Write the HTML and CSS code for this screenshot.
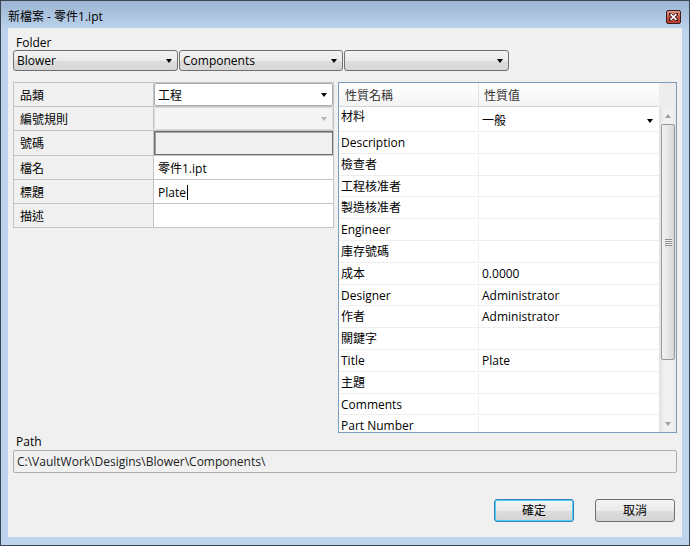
FILE: index.html
```html
<!DOCTYPE html>
<html lang="zh-Hant">
<head>
    <meta charset="UTF-8">
    <title>新檔案 - 零件1.ipt</title>
    <link rel="stylesheet" href="styles.css">
</head>
<body>
    <div class="window">
        <div class="titlebar">
            <span class="title">新檔案 - 零件1.ipt</span>
            <span class="close-btn">
                <svg width="9" height="8" viewBox="0 0 9 8">
                    <path d="M1 1 L8 7 M8 1 L1 7" stroke="#3a1414" stroke-width="3.2" stroke-linecap="square"/>
                    <path d="M1.5 1.2 L7.5 6.8 M7.5 1.2 L1.5 6.8" stroke="#fff" stroke-width="1.6"/>
                </svg>
            </span>
        </div>

        <div class="client">
            <div class="field-label">Folder</div>
            <div class="folder-row">
                <div class="combo combo-blower"><span>Blower</span><i class="arrow"></i></div>
                <div class="combo combo-comp"><span>Components</span><i class="arrow"></i></div>
                <div class="combo combo-empty"><span></span><i class="arrow"></i></div>
            </div>

            <div class="main">
                <div class="prop-grid">
                    <div class="cell label">品類</div>
                    <div class="cell value"><div class="cell-combo">工程<i class="arrow"></i></div></div>
                    <div class="cell label">編號規則</div>
                    <div class="cell value"><div class="cell-combo disabled"><i class="arrow"></i></div></div>
                    <div class="cell label tall">號碼</div>
                    <div class="cell value tall"><div class="cell-readonly"></div></div>
                    <div class="cell label">檔名</div>
                    <div class="cell value text">零件1.ipt</div>
                    <div class="cell label">標題</div>
                    <div class="cell value text">Plate<span class="caret"></span></div>
                    <div class="cell label">描述</div>
                    <div class="cell value text"></div>
                </div>

                <div class="prop-table">
                    <div class="prop-head">
                        <div class="head-cell name">性質名稱</div>
                        <div class="head-cell val">性質值</div>
                        <div class="head-corner"></div>
                    </div>
                    <div class="prop-body">
                        <div class="prop-rows">
                            <div class="prop-row first">
                                <div class="p-name">材料</div>
                                <div class="p-val"><span>一般</span><i class="arrow"></i></div>
                            </div>
                            <div class="prop-row"><div class="p-name">Description</div><div class="p-val"></div></div>
                            <div class="prop-row"><div class="p-name">檢查者</div><div class="p-val"></div></div>
                            <div class="prop-row"><div class="p-name">工程核准者</div><div class="p-val"></div></div>
                            <div class="prop-row"><div class="p-name">製造核准者</div><div class="p-val"></div></div>
                            <div class="prop-row"><div class="p-name">Engineer</div><div class="p-val"></div></div>
                            <div class="prop-row"><div class="p-name">庫存號碼</div><div class="p-val"></div></div>
                            <div class="prop-row"><div class="p-name">成本</div><div class="p-val">0.0000</div></div>
                            <div class="prop-row"><div class="p-name">Designer</div><div class="p-val">Administrator</div></div>
                            <div class="prop-row"><div class="p-name">作者</div><div class="p-val">Administrator</div></div>
                            <div class="prop-row"><div class="p-name">關鍵字</div><div class="p-val"></div></div>
                            <div class="prop-row"><div class="p-name">Title</div><div class="p-val">Plate</div></div>
                            <div class="prop-row"><div class="p-name">主題</div><div class="p-val"></div></div>
                            <div class="prop-row"><div class="p-name">Comments</div><div class="p-val"></div></div>
                            <div class="prop-row"><div class="p-name">Part Number</div><div class="p-val"></div></div>
                        </div>
                        <div class="scrollbar">
                            <div class="sb-btn"><i class="sb-up"></i></div>
                            <div class="sb-thumb"><i class="grip"></i></div>
                            <div class="sb-track"></div>
                            <div class="sb-btn"><i class="sb-down"></i></div>
                        </div>
                    </div>
                </div>
            </div>

            <div class="field-label path-label">Path</div>
            <div class="path-box">C:\VaultWork\Desigins\Blower\Components\</div>

            <div class="buttons">
                <div class="btn default">確定</div>
                <div class="btn">取消</div>
            </div>
        </div>
    </div>
</body>
</html>
```

FILE: styles.css
```css
* {
    margin: 0;
    padding: 0;
    box-sizing: border-box;
}

body {
    background: #bed4ec;
    font-family: 'Open Sans', 'Noto Sans CJK TC', sans-serif;
    font-size: 12px;
    color: #000;
}

.window {
    width: 690px;
    height: 546px;
    border: 1px solid #3a4654;
    background: #bed4ec;
    display: flex;
    flex-direction: column;
    overflow: hidden;
}

.titlebar {
    height: 27px;
    flex: none;
    display: flex;
    align-items: flex-start;
    justify-content: space-between;
    padding: 0 8px 0 7px;
    background: linear-gradient(#9cb5d2, #bad1eb);
}

.title {
    padding-top: 8px;
    line-height: 16px;
}

.close-btn {
    margin-top: 9px;
    width: 15px;
    height: 14px;
    border: 1px solid #3c1c1c;
    border-radius: 2px;
    background: linear-gradient(#e39a8a, #c5503c 55%, #b9412e);
    display: flex;
    align-items: center;
    justify-content: center;
}

.client {
    flex: 1;
    margin: 0 7px 8px 7px;
    background: #f0f0f0;
    padding: 7px 5px 15px;
    display: flex;
    flex-direction: column;
}

.field-label {
    height: 15px;
    line-height: 16px;
    padding-left: 3px;
}

/* folder combos */
.folder-row {
    display: flex;
    gap: 1px;
    height: 21px;
}

.combo {
    height: 21px;
    border: 1px solid #707070;
    border-radius: 3px;
    background: linear-gradient(#f3f3f3, #ebebeb 50%, #dddddd 51%, #d6d6d6);
    display: flex;
    align-items: center;
    justify-content: space-between;
    padding: 0 4px 0 3px;
    line-height: 19px;
}

.combo-blower { width: 165px; }
.combo-comp { width: 164px; }
.combo-empty { width: 165px; }

.arrow {
    width: 0;
    height: 0;
    border-left: 3.5px solid transparent;
    border-right: 3.5px solid transparent;
    border-top: 4px solid #000;
    margin-right: 1px;
}

/* main area */
.main {
    margin-top: 11px;
    height: 351px;
    display: flex;
    gap: 4px;
}

.prop-grid {
    width: 321px;
    align-self: flex-start;
    display: grid;
    grid-template-columns: 140px 1fr;
    border-top: 1px solid #c4c4c4;
    border-left: 1px solid #c4c4c4;
}

.cell {
    height: 24px;
    border-right: 1px solid #c4c4c4;
    border-bottom: 1px solid #c4c4c4;
}

.cell.tall {
    height: 25px;
}

.cell.label {
    padding: 1px 0 0 6px;
    line-height: 23px;
    background: #f0f0f0;
}

.cell.value {
    background: #fff;
}

.cell.text {
    padding: 2px 0 0 4px;
    line-height: 21px;
    display: flex;
    align-items: center;
}

.caret {
    width: 1px;
    height: 15px;
    background: #000;
    margin-left: 1px;
}

.cell-combo {
    height: 23px;
    border: 1px solid #acacac;
    border-radius: 2px;
    background: #fff;
    display: flex;
    align-items: center;
    justify-content: space-between;
    padding: 1px 4px 0 3px;
}

.cell-combo.disabled {
    background: #f4f4f4;
    border-color: #d9d9d9;
    justify-content: flex-end;
}

.cell-combo.disabled .arrow {
    border-top-color: #b4b4b4;
}

.cell-readonly {
    height: 24px;
    background: #f0f0f0;
    border: 1px solid #6f6f6f;
    box-shadow: inset 1px 1px 0 #a4a4a4;
}

/* property table */
.prop-table {
    flex: 1;
    border: 1px solid #7c9cbd;
    background: #fff;
    display: flex;
    flex-direction: column;
    min-height: 0;
}

.prop-head {
    height: 24px;
    flex: none;
    display: flex;
}

.head-cell {
    padding-top: 2px;
    line-height: 21px;
    color: #333;
    background: linear-gradient(#fff, #f4f4f4);
    border-bottom: 1px solid #d5d5d5;
}

.head-cell.name {
    width: 140px;
    padding-left: 6px;
    border-right: 1px solid #e2e2e2;
}

.head-cell.val {
    width: 180px;
    padding-left: 5px;
}

.head-corner {
    flex: 1;
    background: #ececec;
}

.prop-body {
    flex: 1;
    display: flex;
    min-height: 0;
    overflow: hidden;
}

.prop-rows {
    flex: 1;
    overflow: hidden;
}

.prop-row {
    display: flex;
    height: 21.8px;
    border-bottom: 1px solid #eeeeee;
    line-height: 20px;
    padding-top: 1px;
}

.prop-row.first {
    height: 25px;
    padding-top: 0;
}

.p-name {
    width: 140px;
    padding-left: 2px;
    border-right: 1px solid #eeeeee;
}

.p-val {
    flex: 1;
    padding-left: 3px;
}

.prop-row.first .p-name {
    line-height: 20px;
}

.prop-row.first .p-val {
    display: flex;
    align-items: center;
    justify-content: space-between;
    padding: 3px 5px 0 3px;
}

/* scrollbar */
.scrollbar {
    width: 17px;
    display: flex;
    flex-direction: column;
    background: linear-gradient(to right, #e2e2e2, #f0f0f0 30%, #f0f0f0 80%, #e6e6e6);
}

.sb-btn {
    height: 17px;
    display: flex;
    align-items: center;
    justify-content: center;
}

.sb-up {
    border-left: 3.5px solid transparent;
    border-right: 3.5px solid transparent;
    border-bottom: 4px solid #a0a0a0;
}

.sb-down {
    border-left: 3.5px solid transparent;
    border-right: 3.5px solid transparent;
    border-top: 4px solid #a0a0a0;
}

.sb-thumb {
    height: 236px;
    margin: 0 1px 0 2px;
    border: 1px solid #979797;
    border-radius: 2px;
    background: linear-gradient(to right, #f2f2f2, #e6e6e6 50%, #d6d6d6);
    display: flex;
    align-items: center;
    justify-content: center;
}

.grip {
    width: 7px;
    height: 7px;
    background: repeating-linear-gradient(#8a8a8a 0 1px, #f4f4f4 1px 2px);
}

.sb-track {
    flex: 1;
}

/* path and buttons */
.path-label {
    margin-top: 1px;
    height: 16px;
}

.path-box {
    height: 23px;
    border: 1px solid #adadad;
    border-radius: 2px;
    background: #f0f0f0;
    line-height: 21px;
    padding-left: 3px;
    color: #222;
}

.buttons {
    margin-top: auto;
    display: flex;
    justify-content: flex-end;
    gap: 21px;
    padding-right: 2px;
}

.btn {
    width: 80px;
    height: 23px;
    border: 1px solid #707070;
    border-radius: 3px;
    background: linear-gradient(#f3f3f3, #ebebeb 50%, #dddddd 51%, #d3d3d3);
    text-align: center;
    line-height: 21px;
}

.btn.default {
    border-color: #3c7fb1;
    box-shadow: inset 0 0 0 1px #48cffa;
}
```
